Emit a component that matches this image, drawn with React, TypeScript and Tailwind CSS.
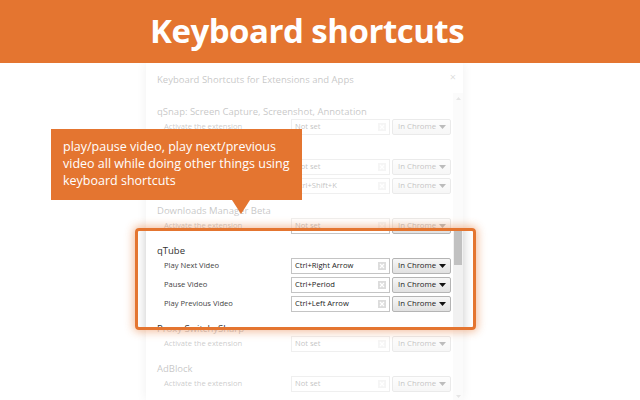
import React from "react";

const UI = { fontFamily: '"Open Sans", "Liberation Sans", sans-serif' };

function ClearIcon() {
  return (
    <svg width="8" height="8" viewBox="0 0 8 8" className="shrink-0">
      <rect x="0" y="0" width="8" height="8" fill="#dcdcdc" />
      <path d="M2 2 L6 6 M6 2 L2 6" stroke="#ffffff" strokeWidth="1.2" />
    </svg>
  );
}

function Arrow() {
  return (
    <svg width="7" height="4" viewBox="0 0 7 4" className="shrink-0">
      <path d="M0 0 L7 0 L3.5 4 Z" fill="#111" />
    </svg>
  );
}

function Row({ label, value }: { label: string; value: string }) {
  return (
    <div className="flex items-center h-[19px]">
      <div className="w-[134px] pl-[7px] text-[7.6px] text-[#444] whitespace-nowrap">{label}</div>
      <div className="w-[99px] h-[16px] border border-[#c4c4c4] bg-white flex items-center justify-between pl-[3px] pr-[3px]">
        <span className="text-[7.6px] text-[#222] whitespace-nowrap">{value}</span>
        <ClearIcon />
      </div>
      <div className="ml-[2px] w-[59px] h-[16px] border border-[#b4b4b4] rounded-[2px] bg-gradient-to-b from-[#f7f7f7] to-[#e1e1e1] flex items-center justify-between pl-[5px] pr-[4px]">
        <span className="text-[7.8px] text-[#222] whitespace-nowrap">In Chrome</span>
        <Arrow />
      </div>
    </div>
  );
}

function Section({ title, rows, first }: { title: string; rows: [string, string][]; first?: boolean }) {
  return (
    <div className={first ? "" : "mt-[11px]"}>
      <div className="h-[10px] leading-[10px] text-[9.5px] text-[#333] whitespace-nowrap">{title}</div>
      {rows.map(([l, v], i) => (
        <Row key={i} label={l} value={v} />
      ))}
    </div>
  );
}

export default function App() {
  return (
    <div className="relative w-[640px] h-[400px] overflow-hidden bg-white" style={UI}>
      <div className="relative z-10 h-[63px] bg-[#e47530] flex items-center pl-[150px] pb-[2px]">
        <span className="text-white font-bold text-[33px] leading-none tracking-[-0.5px]">Keyboard shortcuts</span>
      </div>

      <div className="flex">
        <div className="ml-[146px] w-[317px] h-[337px] bg-white shadow-[0_0_10px_rgba(0,0,0,0.22)] flex flex-col">
          <div className="h-[30px] flex items-start justify-between pl-[11px] pr-[7px] pt-[10px]">
            <span className="text-[9.5px] text-[#333] whitespace-nowrap">Keyboard Shortcuts for Extensions and Apps</span>
            <span className="text-[11px] leading-none text-[#888] -mt-[2px]">×</span>
          </div>
          <div className="flex flex-1 min-h-0">
            <div className="flex-1 pl-[11px] pt-[14px] overflow-hidden">
              <Section first title="qSnap: Screen Capture, Screenshot, Annotation" rows={[["Activate the extension", "Not set"]]} />
              <Section
                title=""
                rows={[
                  ["", "Not set"],
                  ["", "Ctrl+Shift+K"],
                ]}
              />
              <Section title="Downloads Manager Beta" rows={[["Activate the extension", "Not set"]]} />
              <Section
                title="qTube"
                rows={[
                  ["Play Next Video", "Ctrl+Right Arrow"],
                  ["Pause Video", "Ctrl+Period"],
                  ["Play Previous Video", "Ctrl+Left Arrow"],
                ]}
              />
              <Section title="Proxy SwitchySharp" rows={[["Activate the extension", "Not set"]]} />
              <Section title="AdBlock" rows={[["Activate the extension", "Not set"]]} />
            </div>
            <div className="w-[10px] bg-[#f1f1f1] flex flex-col items-center">
              <div className="h-[10px] flex items-center justify-center">
                <svg width="5" height="3" viewBox="0 0 5 3">
                  <path d="M0 3 L5 3 L2.5 0 Z" fill="#a3a3a3" />
                </svg>
              </div>
              <div className="h-[126px]" />
              <div className="w-[8px] h-[36px] bg-[#c1c1c1]" />
              <div className="flex-1" />
              <div className="h-[8px] flex items-center justify-center">
                <svg width="5" height="3" viewBox="0 0 5 3">
                  <path d="M0 0 L5 0 L2.5 3 Z" fill="#a3a3a3" />
                </svg>
              </div>
            </div>
          </div>
        </div>
      </div>

      <div className="absolute z-[5] left-[135px] top-[228px] w-[341px] h-[102px] border-[3px] border-[#e47530] rounded-[4px] pointer-events-none shadow-[0_0_8px_2px_rgba(228,117,48,0.45),0_0_0_2000px_rgba(255,255,255,0.72)]" />

      <div className="absolute z-20 left-[51px] top-[129px] w-[251px] h-[71px] bg-[#e47530] pl-[12px] pt-[9px] text-white text-[12.5px] leading-[17px]">
        play/pause video, play next/previous
        <br />
        video all while doing other things using
        <br />
        keyboard shortcuts
        <div className="absolute left-[181px] top-full w-0 h-0 border-l-[9px] border-r-[9px] border-t-[14px] border-l-transparent border-r-transparent border-t-[#e47530]" />
      </div>
    </div>
  );
}
